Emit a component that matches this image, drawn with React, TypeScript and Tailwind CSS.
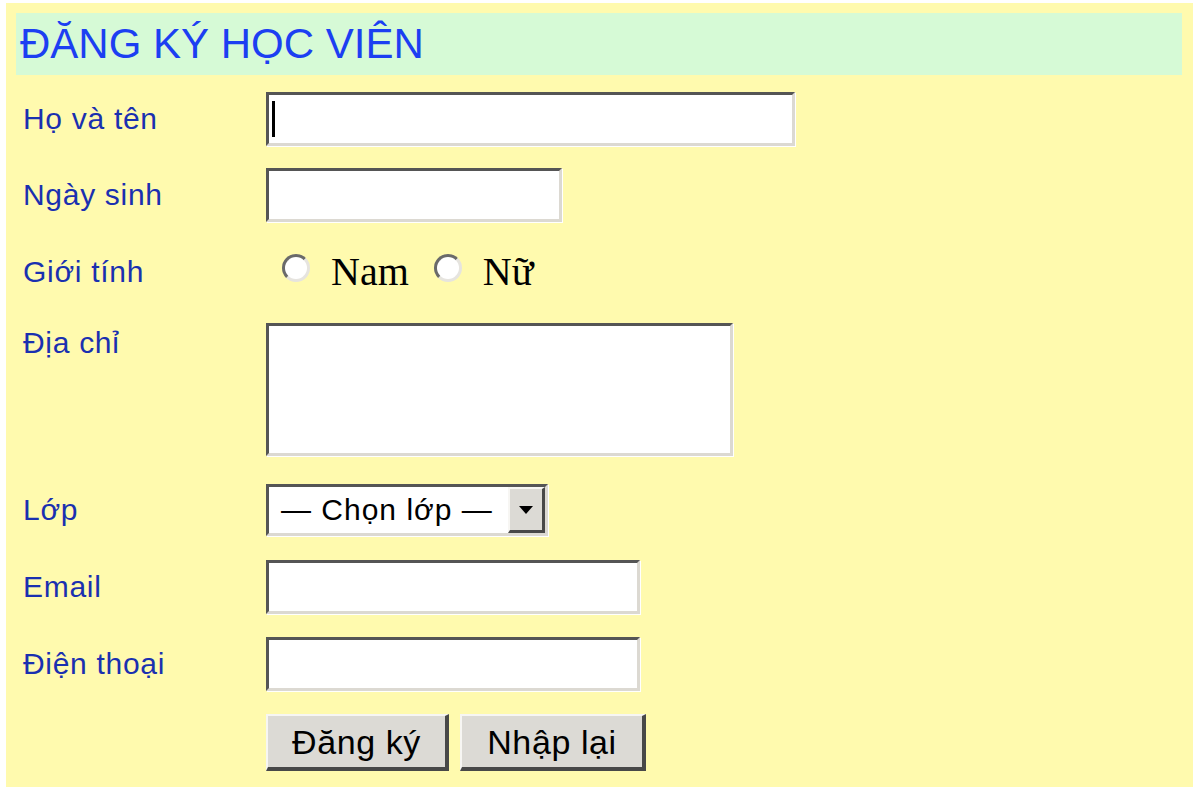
import React from "react"

// Student registration form: old-school 3D form controls on a yellow panel

const sans = "font-['Liberation_Sans',Arial,sans-serif]"
const inset =
    "border-[3px] border-t-[#555555] border-l-[#555555] border-b-[#dcd9d2] border-r-[#dcd9d2] shadow-[1px_1px_0_#ffffff] bg-white"

function Label(props: { children: React.ReactNode; top?: boolean }) {
    return (
        <div className={`w-[250px] shrink-0 pl-[7px] text-[30px] tracking-[0.7px] leading-none text-[#1a30b0] ${sans} ${props.top ? "self-start pt-[5px]" : ""}`}>
            {props.children}
        </div>
    )
}

function TextField(props: { w: string; caret?: boolean }) {
    return (
        <div className={`${inset} ${props.w} h-[54px] flex items-center px-[3px]`}>
            {props.caret && <span className="w-[3px] h-[36px] bg-black" />}
            <input className="flex-1 min-w-0 h-full outline-none bg-transparent" />
        </div>
    )
}

function Radio(props: { label: string }) {
    return (
        <label className="flex items-center gap-[21px]">
            <span className="w-[28px] h-[28px] rounded-full bg-white border-[3px] border-t-[#6a6a6a] border-l-[#6a6a6a] border-b-[#e6e4df] border-r-[#e6e4df] -mt-[8px]" />
            <span className="font-['Liberation_Serif','Times_New_Roman',serif] text-[40px] leading-none text-black">{props.label}</span>
        </label>
    )
}

function Button(props: { children: React.ReactNode; w: string }) {
    return (
        <button className={`${props.w} h-[57px] bg-[#dcdad5] border-t-2 border-l-2 border-t-[#f7f6f3] border-l-[#f7f6f3] border-b-[4px] border-r-[4px] border-b-[#484848] border-r-[#484848] text-[34px] tracking-[0.6px] leading-none text-black ${sans}`}>
            {props.children}
        </button>
    )
}

export default function App() {
    return (
        <div className="w-[1194px] h-[794px] bg-white pt-[3px] pl-[6px]">
            <div className="w-[1187px] h-[784px] bg-[#fffaae] pt-[10px] px-[10px] flex flex-col">
                <div className="h-[62px] w-[1166px] bg-[#d6fad6] flex items-center pl-[4px]">
                    <h1 className={`text-[42px] leading-none text-[#1c3ff2] ${sans}`}>ĐĂNG KÝ HỌC VIÊN</h1>
                </div>

                <div className="flex items-center mt-[17px] h-[54px]">
                    <Label>Họ và tên</Label>
                    <TextField w="w-[529px]" caret />
                </div>

                <div className="flex items-center mt-[22px] h-[54px]">
                    <Label>Ngày sinh</Label>
                    <TextField w="w-[296px]" />
                </div>

                <div className="flex items-center mt-[24px] h-[52px]">
                    <Label>Giới tính</Label>
                    <div className="flex items-center gap-[25px] pl-[16px]">
                        <Radio label="Nam" />
                        <Radio label="Nữ" />
                    </div>
                </div>

                <div className="flex mt-[25px] h-[133px]">
                    <Label top>Địa chỉ</Label>
                    <textarea className={`${inset} w-[467px] h-[133px] resize-none outline-none`} />
                </div>

                <div className="flex items-center mt-[28px] h-[52px]">
                    <Label>Lớp</Label>
                    <div className={`${inset} w-[282px] h-[52px] flex items-center`}>
                        <span className={`flex-1 pl-[12px] text-[30px] tracking-[1px] leading-none text-black ${sans}`}>— Chọn lớp —</span>
                        <span className="w-[37px] h-full bg-[#dcdad5] border-t-2 border-l-2 border-t-[#f7f6f3] border-l-[#f7f6f3] border-b-[3px] border-r-[3px] border-b-[#484848] border-r-[#484848] flex items-center justify-center">
                            <svg width="14" height="8" viewBox="0 0 14 8"><path d="M0 0h14L7 8z" fill="#000" /></svg>
                        </span>
                    </div>
                </div>

                <div className="flex items-center mt-[24px] h-[54px]">
                    <Label>Email</Label>
                    <TextField w="w-[374px]" />
                </div>

                <div className="flex items-center mt-[23px] h-[54px]">
                    <Label>Điện thoại</Label>
                    <TextField w="w-[374px]" />
                </div>

                <div className="flex items-center mt-[23px] h-[57px]">
                    <div className="w-[250px] shrink-0" />
                    <div className="flex gap-[11px]">
                        <Button w="w-[183px]">Đăng ký</Button>
                        <Button w="w-[186px]">Nhập lại</Button>
                    </div>
                </div>
            </div>
        </div>
    )
}
